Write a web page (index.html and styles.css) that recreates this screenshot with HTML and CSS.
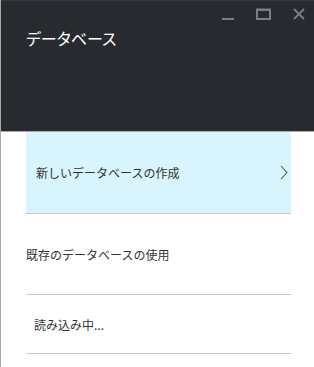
FILE: index.html
```html
<!DOCTYPE html>
<html lang="ja">
<head>
    <meta charset="UTF-8">
    <meta name="viewport" content="width=device-width, initial-scale=1.0">
    <title>データベース</title>
<link rel="stylesheet" href="styles.css">
</head>
<body>
    <div class="blade">
        <div class="blade-header">
            <div class="win-controls">
                <svg class="win-btn" width="12" height="12" viewBox="0 0 12 12">
                    <rect x="0" y="10" width="12" height="2" fill="#7b7e82"/>
                </svg>
                <svg class="win-btn" width="15" height="12" viewBox="0 0 15 12">
                    <rect x="1" y="1.5" width="13" height="9.5" fill="none" stroke="#7b7e82" stroke-width="2"/>
                    <rect x="1" y="1" width="13" height="2" fill="#7b7e82"/>
                </svg>
                <svg class="win-btn" width="12" height="12" viewBox="0 0 12 12">
                    <path d="M1 1 L11 11 M11 1 L1 11" stroke="#7b7e82" stroke-width="1.8"/>
                </svg>
            </div>
            <h1 class="blade-title">データベース</h1>
        </div>

        <!-- options list -->
        <div class="option-list">
            <div class="option option-selected">
                <span>新しいデータベースの作成</span>
                <svg class="chevron" width="8" height="15" viewBox="0 0 8 15">
                    <path d="M1 1 L7 7.5 L1 14" fill="none" stroke="#555a5e" stroke-width="1.1"/>
                </svg>
            </div>
            <div class="option option-plain">
                <span>既存のデータベースの使用</span>
            </div>
            <div class="option option-loading">
                <span>読み込み中...</span>
            </div>
        </div>
    </div>
</body>
</html>
```

FILE: styles.css
```css
body {
    margin: 0;
    font-family: "Noto Sans CJK JP", "Noto Sans", sans-serif;
    background-color: white;
}

.blade {
    height: 367px;
    border-left: 1px solid #a8a8a8;
    display: flex;
    flex-direction: column;
}

.blade-header {
    height: 132px;
    box-sizing: border-box;
    background-color: #272b30;
    border-top: 1px solid #34393e;
    border-bottom: 1px solid #a9a9a9;
    padding: 7px 9px 0 25px;
    flex-shrink: 0;
}

.win-controls {
    display: flex;
    justify-content: flex-end;
    gap: 22px;
}

.win-btn {
    display: block;
}

.blade-title {
    margin: 6px 0 0 0;
    font-size: 16px;
    font-weight: normal;
    line-height: 24px;
    color: white;
    font-feature-settings: "palt";
}

.option-list {
    margin: 0 23px 0 25px;
}

.option {
    display: flex;
    align-items: center;
    justify-content: space-between;
    border-bottom: 1px solid #c8c8c8;
    color: #333333;
    font-size: 12px;
}

.option-selected {
    height: 81px;
    background-color: #d8f4fc;
    padding: 0 3px 0 10px;
}

.option-plain {
    height: 80px;
}

.option-loading {
    height: 58px;
    padding-left: 8px;
}

.chevron {
    display: block;
    margin-top: -1px;
}
```
